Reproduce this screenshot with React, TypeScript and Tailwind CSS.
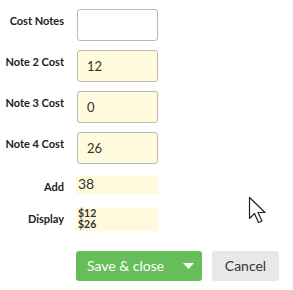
import React from 'react'

const font = { fontFamily: 'Lato, "Noto Sans", sans-serif' }

function Label({ children, className = '' }: { children: React.ReactNode; className?: string }) {
  return (
    <div className={`w-[64px] shrink-0 text-right text-[11px] font-bold text-[#222] ${className}`}>
      {children}
    </div>
  )
}

function Field({ label, value, yellow }: { label: string; value?: string; yellow?: boolean }) {
  return (
    <div className="flex gap-[13px]">
      <Label className="pt-[4px]">{label}</Label>
      <div
        className={`h-[32px] w-[81px] rounded-[3px] border border-[#b9b9b9] px-[9px] pt-[7px] text-[13px] leading-[16px] text-[#333] ${
          yellow ? 'bg-[#fffbdc]' : 'bg-white'
        }`}
      >
        {value}
      </div>
    </div>
  )
}

export default function App() {
  return (
    <div className="relative h-[290px] w-[293px] bg-white" style={font}>
      <div className="flex flex-col gap-[9px] pt-[9px]">
        <Field label="Cost Notes" />
        <Field label="Note 2 Cost" value="12" yellow />
        <Field label="Note 3 Cost" value="0" yellow />
        <Field label="Note 4 Cost" value="26" yellow />
      </div>

      <div className="mt-[12px] flex gap-[12px]">
        <Label className="pt-[3px]">Add</Label>
        <div className="h-[18px] w-[82px] bg-[#fffadc] pl-[2px] text-[14px] leading-[16px] text-[#333]">38</div>
      </div>

      <div className="mt-[12px] flex gap-[12px]">
        <Label className="pt-[3px]">Display</Label>
        <div className="h-[23px] w-[82px] bg-[#fffadc] pl-[2px] text-[10.5px] font-bold leading-[11.5px] text-[#333]">
          <div>$12</div>
          <div>$26</div>
        </div>
      </div>

      <div className="ml-[76px] mt-[20px] flex gap-[10px]">
        <button className="flex h-[30px] w-[126px] items-center rounded-[3px] bg-[#67bd59] pl-[11px] text-[14px] text-white">
          <span>Save &amp; close</span>
          <svg className="ml-[19px]" width="11" height="6" viewBox="0 0 11 6">
            <path d="M0 0H11L5.5 6Z" fill="white" />
          </svg>
        </button>
        <button className="h-[30px] w-[67px] rounded-[3px] bg-[#e8e8e8] text-[14px] text-[#333]">Cancel</button>
      </div>

      <svg className="absolute left-[248px] top-[196px]" width="22" height="30" viewBox="0 0 22 30">
        <path
          d="M1.5 1.5V22.5L6.5 17.5L10.5 26.5L14 25L10 16.5H17Z"
          fill="white"
          stroke="#222"
          strokeWidth="1.2"
          strokeLinejoin="round"
        />
      </svg>
    </div>
  )
}
